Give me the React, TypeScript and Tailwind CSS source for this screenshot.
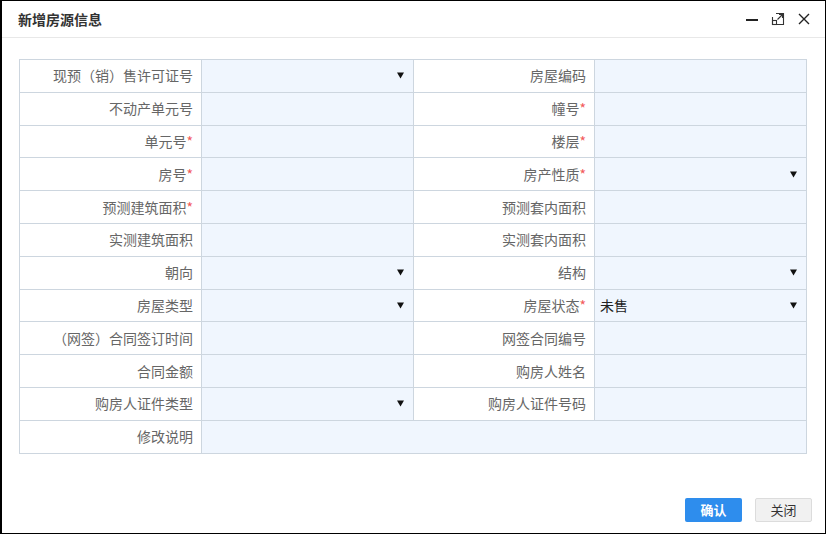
import React from "react";

type Cell = { label: string; req?: boolean; select?: boolean; value?: string };

const rows: [Cell, Cell][] = [
  [{ label: "现预（销）售许可证号", select: true }, { label: "房屋编码" }],
  [{ label: "不动产单元号" }, { label: "幢号", req: true }],
  [{ label: "单元号", req: true }, { label: "楼层", req: true }],
  [{ label: "房号", req: true }, { label: "房产性质", req: true, select: true }],
  [{ label: "预测建筑面积", req: true }, { label: "预测套内面积" }],
  [{ label: "实测建筑面积" }, { label: "实测套内面积" }],
  [{ label: "朝向", select: true }, { label: "结构", select: true }],
  [{ label: "房屋类型", select: true }, { label: "房屋状态", req: true, select: true, value: "未售" }],
  [{ label: "（网签）合同签订时间" }, { label: "网签合同编号" }],
  [{ label: "合同金额" }, { label: "购房人姓名" }],
  [{ label: "购房人证件类型", select: true }, { label: "购房人证件号码" }],
];

function Label({ c }: { c: Cell }) {
  return (
    <td className="border border-[#cdd6df] pr-[8px] text-right text-[14px] text-[#666] bg-white whitespace-nowrap">
      {c.label}
      {c.req && <span className="text-[#f25a5a]">*</span>}
    </td>
  );
}

function Input({ c, span }: { c: Cell; span?: number }) {
  return (
    <td colSpan={span} className="border border-[#cdd6df] bg-[#f0f6fe] px-[5px]">
      <div className="flex items-center justify-between">
        <span className="text-[14px] font-normal text-[#222]">{c.value ?? ""}</span>
        {c.select && (
          <svg width="7" height="7" viewBox="0 0 7 7" className="mr-[4px]">
            <path d="M0 0.5H7L3.5 6.5Z" fill="#111" />
          </svg>
        )}
      </div>
    </td>
  );
}

export default function App() {
  return (
    <div
      className="w-[826px] h-[534px] bg-white border border-black border-l-2 flex flex-col"
      style={{ fontFamily: '"Microsoft YaHei", "Noto Sans CJK SC", sans-serif' }}
    >
      <div className="h-[37px] flex items-center justify-between pl-[16px] pr-[14px] border-b border-[#e8e8e8] shrink-0">
        <span className="text-[14px] font-bold text-[#333]">新增房源信息</span>
        <div className="flex items-center gap-[12px]">
          <svg width="13" height="13" viewBox="0 0 13 13">
            <rect x="0" y="6" width="12" height="2" fill="#222" />
          </svg>
          <svg width="14" height="14" viewBox="0 0 14 14" fill="none" stroke="#333" strokeWidth="1.1">
            <path d="M5 1.5h7.5v11H1.5V5" />
            <rect x="1.5" y="8.5" width="4" height="4" />
            <path d="M6.5 7.5L11.5 2.5M8 2.5h3.5V6" />
          </svg>
          <svg width="14" height="14" viewBox="0 0 14 14" stroke="#222" strokeWidth="1.4">
            <path d="M2 2L12 12M12 2L2 12" />
          </svg>
        </div>
      </div>
      <div className="pl-[17px] pt-[21px]">
        <table className="border-collapse table-fixed w-[788px]">
          <colgroup>
            <col className="w-[182px]" />
            <col className="w-[212px]" />
            <col className="w-[181px]" />
            <col className="w-[212px]" />
          </colgroup>
          <tbody>
            {rows.map(([a, b], i) => (
              <tr key={i} className="h-[32.8px]">
                <Label c={a} />
                <Input c={a} />
                <Label c={b} />
                <Input c={b} />
              </tr>
            ))}
            <tr className="h-[32.8px]">
              <Label c={{ label: "修改说明" }} />
              <Input c={{ label: "" }} span={3} />
            </tr>
          </tbody>
        </table>
      </div>
      <div className="flex-1" />
      <div className="flex justify-end gap-[13px] pr-[13px] pb-[11px]">
        <button className="w-[57px] h-[24px] rounded-[2px] bg-[#2e8ded] text-white text-[13px] font-bold">
          确认
        </button>
        <button className="w-[57px] h-[24px] rounded-[2px] bg-[#f1f1f1] border border-[#dcdcdc] text-[#333] text-[13px]">
          关闭
        </button>
      </div>
    </div>
  );
}
